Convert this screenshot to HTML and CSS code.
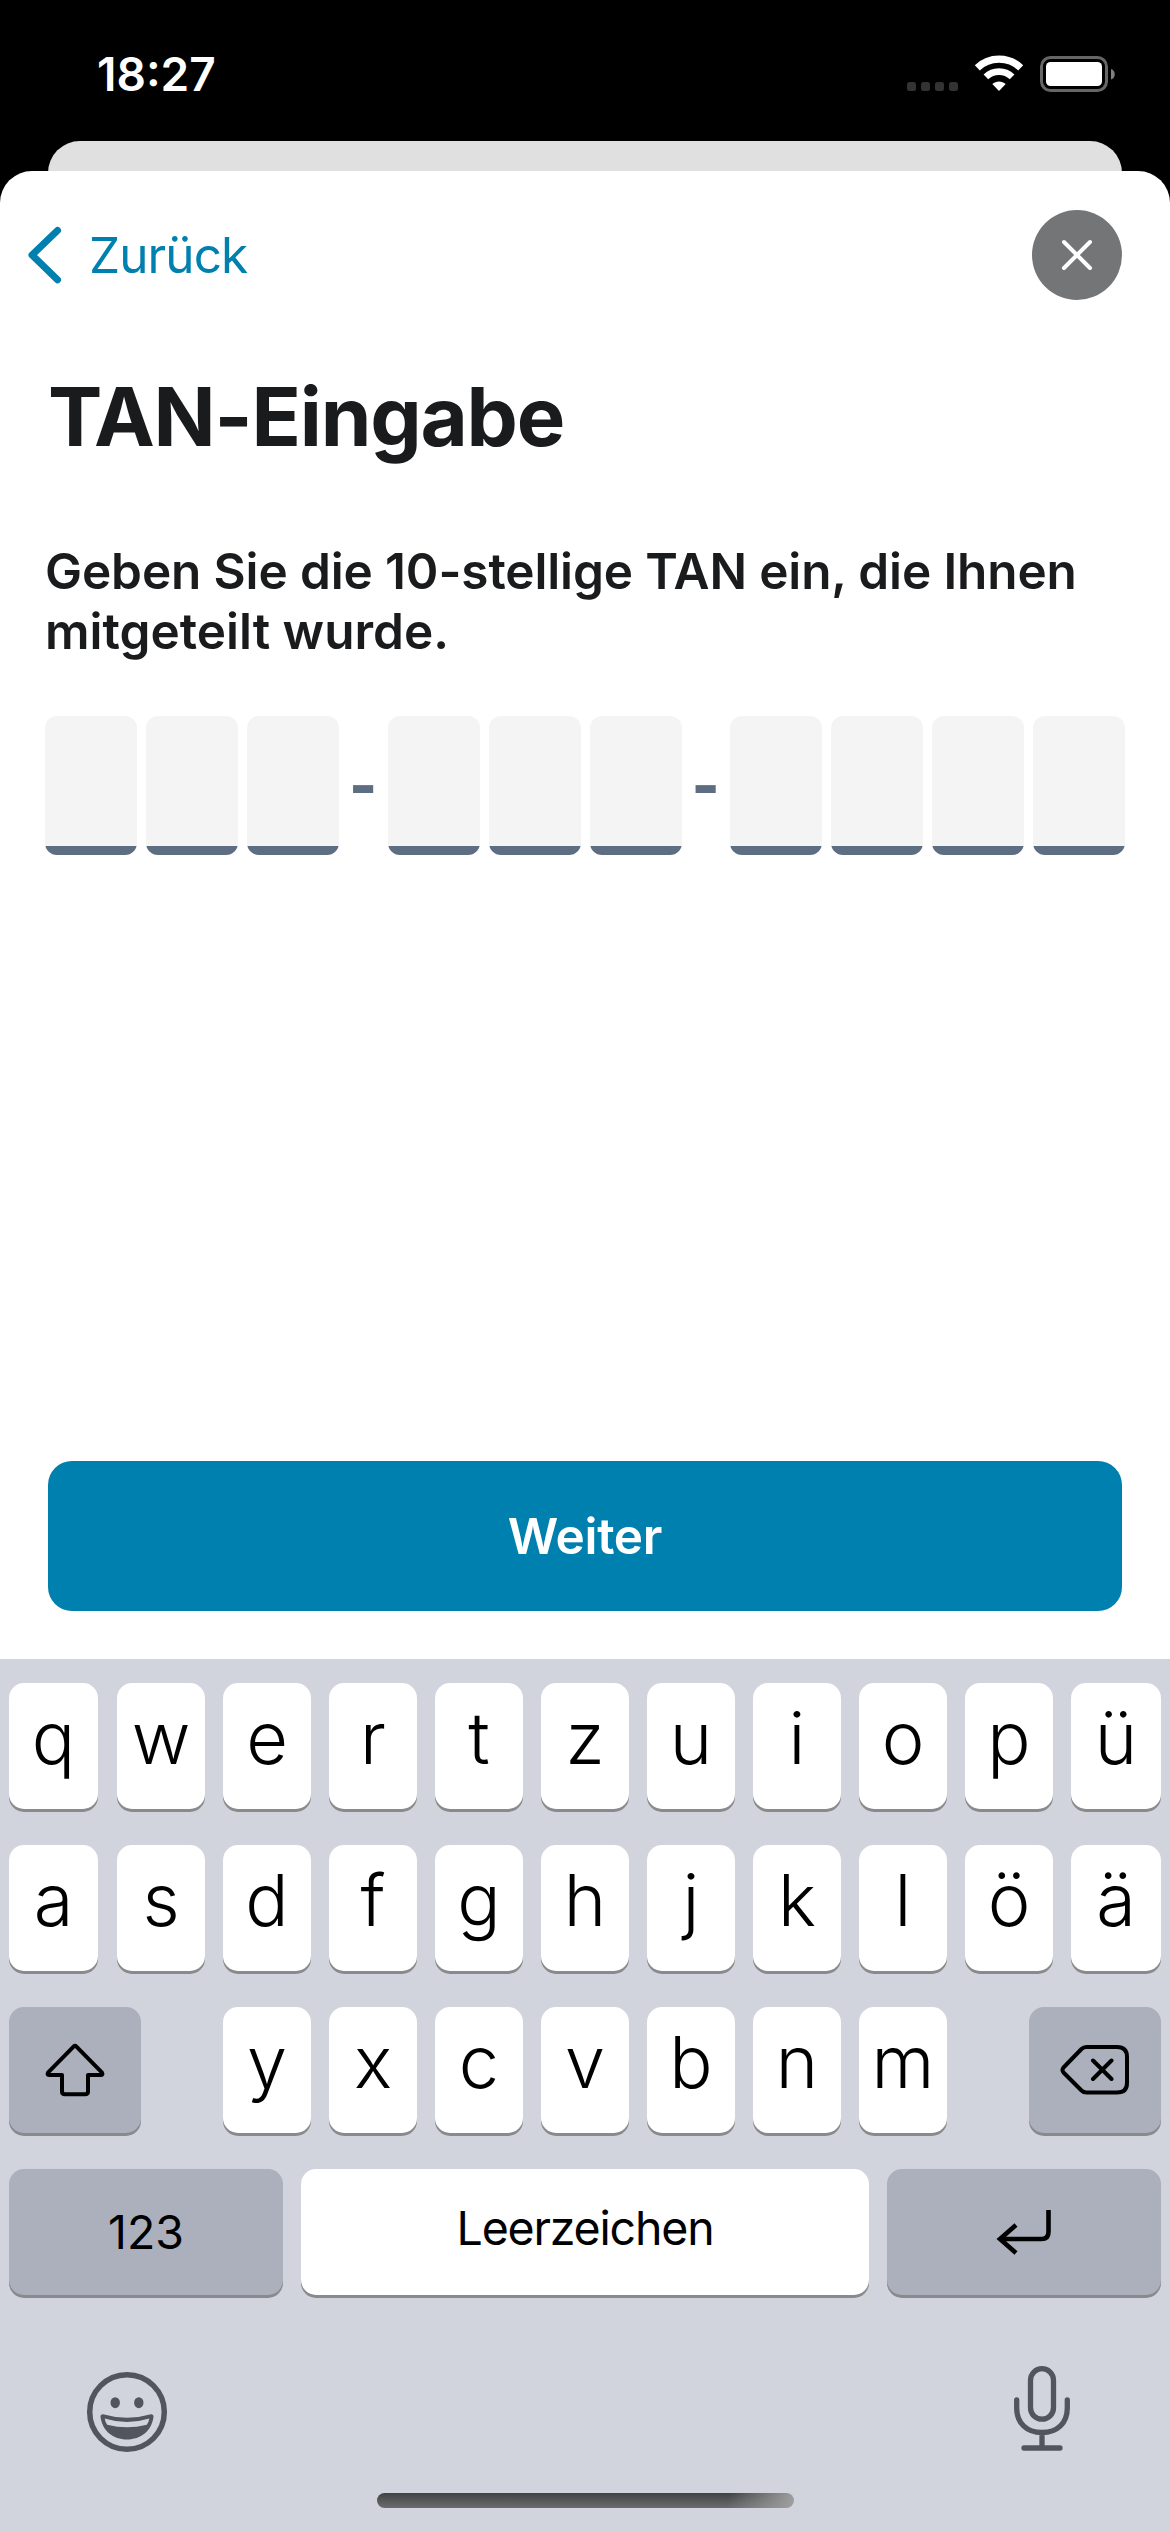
FILE: index.html
```html
<!DOCTYPE html>
<html lang="de">
<head>
<meta charset="utf-8">
<title>TAN-Eingabe</title>
<link rel="stylesheet" href="styles.css">
</head>
<body>
<header class="status">
  <span class="clock">18:27</span>
  <svg class="status-icons" width="212" height="40" viewBox="0 0 212 40">
    <g fill="#333"><rect x="1" y="28" width="9" height="9" rx="2.5"/><rect x="15" y="28" width="9" height="9" rx="2.5"/><rect x="29" y="28" width="9" height="9" rx="2.5"/><rect x="43" y="28" width="9" height="9" rx="2.5"/></g>
    <g fill="none" stroke="#fff"><path d="M71.3 13.800a31.500 31.500 0 0 1 43.400 0" stroke-width="7.300"/><path d="M79.900 22.900a18.800 18.800 0 0 1 26.200 0" stroke-width="6.700"/></g>
    <path d="M93 37l-6.700-7c3.700-3.500 9.700-3.500 13.400 0z" fill="#fff"/>
    <rect x="135.500" y="3.500" width="65" height="33" rx="9" fill="none" stroke="#666" stroke-width="3"/>
    <rect x="140" y="8" width="56" height="24" rx="4.500" fill="#fff"/>
    <path d="M205 15c5 1 5 9.500 0 10.500z" fill="#808080"/>
  </svg>
</header>
<div class="back-sheet"></div>
<main class="sheet">
  <nav class="nav">
    <a class="back">
      <svg width="34" height="58" viewBox="0 0 34 58"><path d="M29.500 4.500L4 29l25.500 24.700" fill="none" stroke="#0080ae" stroke-width="7" stroke-linecap="round" stroke-linejoin="round"/></svg>
      <span>Zurück</span>
    </a>
    <button class="close" aria-label="Schließen">
      <svg width="32" height="32" viewBox="0 0 32 32"><path d="M3 3l26 26M29 3L3 29" stroke="#fff" stroke-width="4" stroke-linecap="round"/></svg>
    </button>
  </nav>
  <h1 class="title">TAN-Eingabe</h1>
  <p class="hint"><span class="line line-first">Geben Sie die 10-stellige TAN ein, die Ihnen</span> <span class="line">mitgeteilt wurde.</span></p>
  <div class="tan">
    <div class="group"><i class="box"></i><i class="box"></i><i class="box"></i></div>
    <span class="dash">-</span>
    <div class="group"><i class="box"></i><i class="box"></i><i class="box"></i></div>
    <span class="dash">-</span>
    <div class="group"><i class="box"></i><i class="box"></i><i class="box"></i><i class="box"></i></div>
  </div>
  <button class="next">Weiter</button>
</main>
<section class="keyboard">
  <div class="keys">
    <b class="key first">q</b><b class="key">w</b><b class="key">e</b><b class="key">r</b><b class="key">t</b><b class="key">z</b><b class="key">u</b><b class="key">i</b><b class="key">o</b><b class="key">p</b><b class="key">ü</b>
  </div>
  <div class="keys">
    <b class="key first">a</b><b class="key">s</b><b class="key">d</b><b class="key">f</b><b class="key">g</b><b class="key">h</b><b class="key">j</b><b class="key">k</b><b class="key">l</b><b class="key">ö</b><b class="key">ä</b>
  </div>
  <div class="row">
    <b class="key dark shift"><svg width="62" height="54" viewBox="0 0 62 54"><path d="M29.800 3.300Q31 2 32.200 3.300L57.800 29.300Q59.300 32 57 32H44V48.500Q44 51.300 41 51.300H21Q18 51.300 18 48.500V32H5Q2.700 32 4.200 29.300Z" fill="none" stroke="#000" stroke-width="4" stroke-linejoin="round"/></svg></b>
    <div class="letters"><b class="key">y</b><b class="key">x</b><b class="key">c</b><b class="key">v</b><b class="key">b</b><b class="key">n</b><b class="key">m</b></div>
    <b class="key dark shift"><svg width="70" height="52" viewBox="0 0 70 52"><path d="M26.500 3H57Q67 3 67 13V39Q67 48.500 57 48.500H26.500Q23.500 48.500 21.500 46.500L3.500 28.500Q1.500 26 3.500 23.500L21.500 5Q23.500 3 26.500 3ZM33 16.500L51.500 35M51.500 16.500L33 35" fill="none" stroke="#000" stroke-width="4" stroke-linecap="round" stroke-linejoin="round"/></svg></b>
  </div>
  <div class="row">
    <b class="key dark wide">123</b>
    <b class="key space">Leerzeichen</b>
    <b class="key dark wide"><svg width="58" height="48" viewBox="0 0 58 48"><path d="M53.500 2V24Q53.500 31 46.500 31H5M21 17L5 31L21 45" fill="none" stroke="#000" stroke-width="4.600"/></svg></b>
  </div>
  <div class="tools">
    <svg width="82" height="82" viewBox="0 0 82 82" fill="#51555d">
      <circle cx="41" cy="41" r="37.300" fill="none" stroke="#51555d" stroke-width="5.500"/>
      <ellipse cx="29.200" cy="31.700" rx="4.700" ry="5.500"/><ellipse cx="52.800" cy="31.700" rx="4.700" ry="5.500"/>
      <path fill-rule="evenodd" d="M17 43.300Q41 50.300 65 43.300Q67.700 43.300 67.500 46C65.500 60 55 68.500 41 68.500S16.500 60 14.500 46Q14.300 43.300 17 43.300ZM18.700 47.500Q19.300 51.500 21.200 53.700Q41 59 60.800 53.700Q62.700 51.500 63.300 47.500Q41 54.500 18.700 47.500Z"/>
    </svg>
    <svg width="58" height="88" viewBox="0 0 58 88" fill="none" stroke="#51555d" stroke-width="5.300" stroke-linecap="round">
      <rect x="17.500" y="3.700" width="23" height="50.500" rx="11.500"/>
      <path d="M3.700 35V43C3.700 58 13.500 67.500 29 67.500S54.300 58 54.300 43V35M29 67.500V83M11 83H47"/>
    </svg>
  </div>
  <div class="home"></div>
</section>
</body>
</html>
```
FILE: styles.css
```css
* { box-sizing: border-box; }
body {
  margin: 0;
  width: 1170px;
  height: 2532px;
  display: flex;
  flex-direction: column;
  background: #000;
  font-family: Inter, "Liberation Sans", sans-serif;
  color: #1a1b1d;
  overflow: hidden;
}
button { border: 0; padding: 0; font-family: inherit; }
svg { display: block; }

.status {
  height: 141px;
  padding: 54px 54px 0 97px;
  display: flex;
  justify-content: space-between;
  align-items: flex-start;
}
.clock {
  color: #fff;
  font-size: 46px;
  line-height: 40px;
  font-weight: 600;
}
.status-icons { margin-right: -2px; }

.back-sheet {
  height: 60px;
  margin: 0 48px -30px;
  background: #e0e0e0;
  border-radius: 32px 32px 0 0;
  flex: none;
}
.sheet {
  height: 1488px;
  flex: none;
  position: relative;
  background: #fff;
  border-radius: 32px 32px 0 0;
  padding: 39px 48px 48px;
  display: flex;
  flex-direction: column;
}
.nav {
  height: 90px;
  margin-left: -20px;
  display: flex;
  justify-content: space-between;
  align-items: center;
}
.back {
  display: flex;
  align-items: center;
  gap: 27px;
  color: #0080ae;
  font-size: 49.500px;
  line-height: 60px;
  letter-spacing: -0.900px;
}
.close {
  width: 90px;
  height: 90px;
  border-radius: 50%;
  background: #747577;
  display: flex;
  align-items: center;
  justify-content: center;
}
.title {
  margin: 68px 0 0;
  font-size: 81.500px;
  line-height: 98px;
  font-weight: 700;
  letter-spacing: -1.200px;
  white-space: nowrap;
}
.hint {
  margin: 75px 0 0 -3px;
  font-size: 49.500px;
  line-height: 60px;
  font-weight: 600;
  white-space: nowrap;
}
.line { display: block; }
.line-first { letter-spacing: -0.120px; }
.tan {
  margin: 55px -3px 0;
  height: 139px;
  display: flex;
}
.group { display: flex; gap: 9px; }
.box {
  width: 92px;
  height: 139px;
  border-radius: 12px;
  background: linear-gradient(#f4f4f4 130px, #5d6e82 130px);
}
.dash {
  flex: 1;
  text-align: center;
  color: #5d6e82;
  font-size: 60px;
  line-height: 139px;
  font-weight: 800;
}
.next {
  margin-top: auto;
  height: 150px;
  flex: none;
  border-radius: 24px;
  background: #0080ae;
  color: #fff;
  font-size: 49.500px;
  font-weight: 600;
  letter-spacing: -0.300px;
}

.keyboard {
  height: 873px;
  flex: none;
  background: #d1d4dc;
  padding: 24px 9px;
  display: flex;
  flex-direction: column;
}
.keys {
  display: grid;
  grid-template-columns: 90px repeat(9, 88px) 90px;
  gap: 18px;
  margin-bottom: 36px;
}
.row {
  display: flex;
  justify-content: space-between;
  margin-bottom: 36px;
}
.letters { display: flex; gap: 18px; }
.key {
  height: 126px;
  min-width: 88px;
  padding-bottom: 17px;
  border-radius: 15px;
  background: #fff;
  box-shadow: 0 3px 0 #898a8d;
  color: #000;
  display: flex;
  align-items: center;
  justify-content: center;
  font-size: 72px;
  font-weight: 350;
}
.first { margin-right: 1px; }
.dark { background: #abb0bc; padding-bottom: 0; }
.shift { width: 132px; }
.wide { width: 274px; font-size: 46.500px; font-weight: 400; }
.space { width: 568px; font-size: 46.500px; font-weight: 400; padding-bottom: 8px; letter-spacing: -1.200px; }
.tools {
  display: flex;
  justify-content: space-between;
  align-items: flex-start;
  padding: 34px 90px 0 77px;
}
.tools svg:first-child { margin-top: 6px; }
.home {
  width: 417px;
  height: 15px;
  margin: auto auto 0;
  border-radius: 8px;
  background: linear-gradient(100deg, transparent 84%, #a0a0a0), linear-gradient(#404244, #6b6c6e);
}
```
